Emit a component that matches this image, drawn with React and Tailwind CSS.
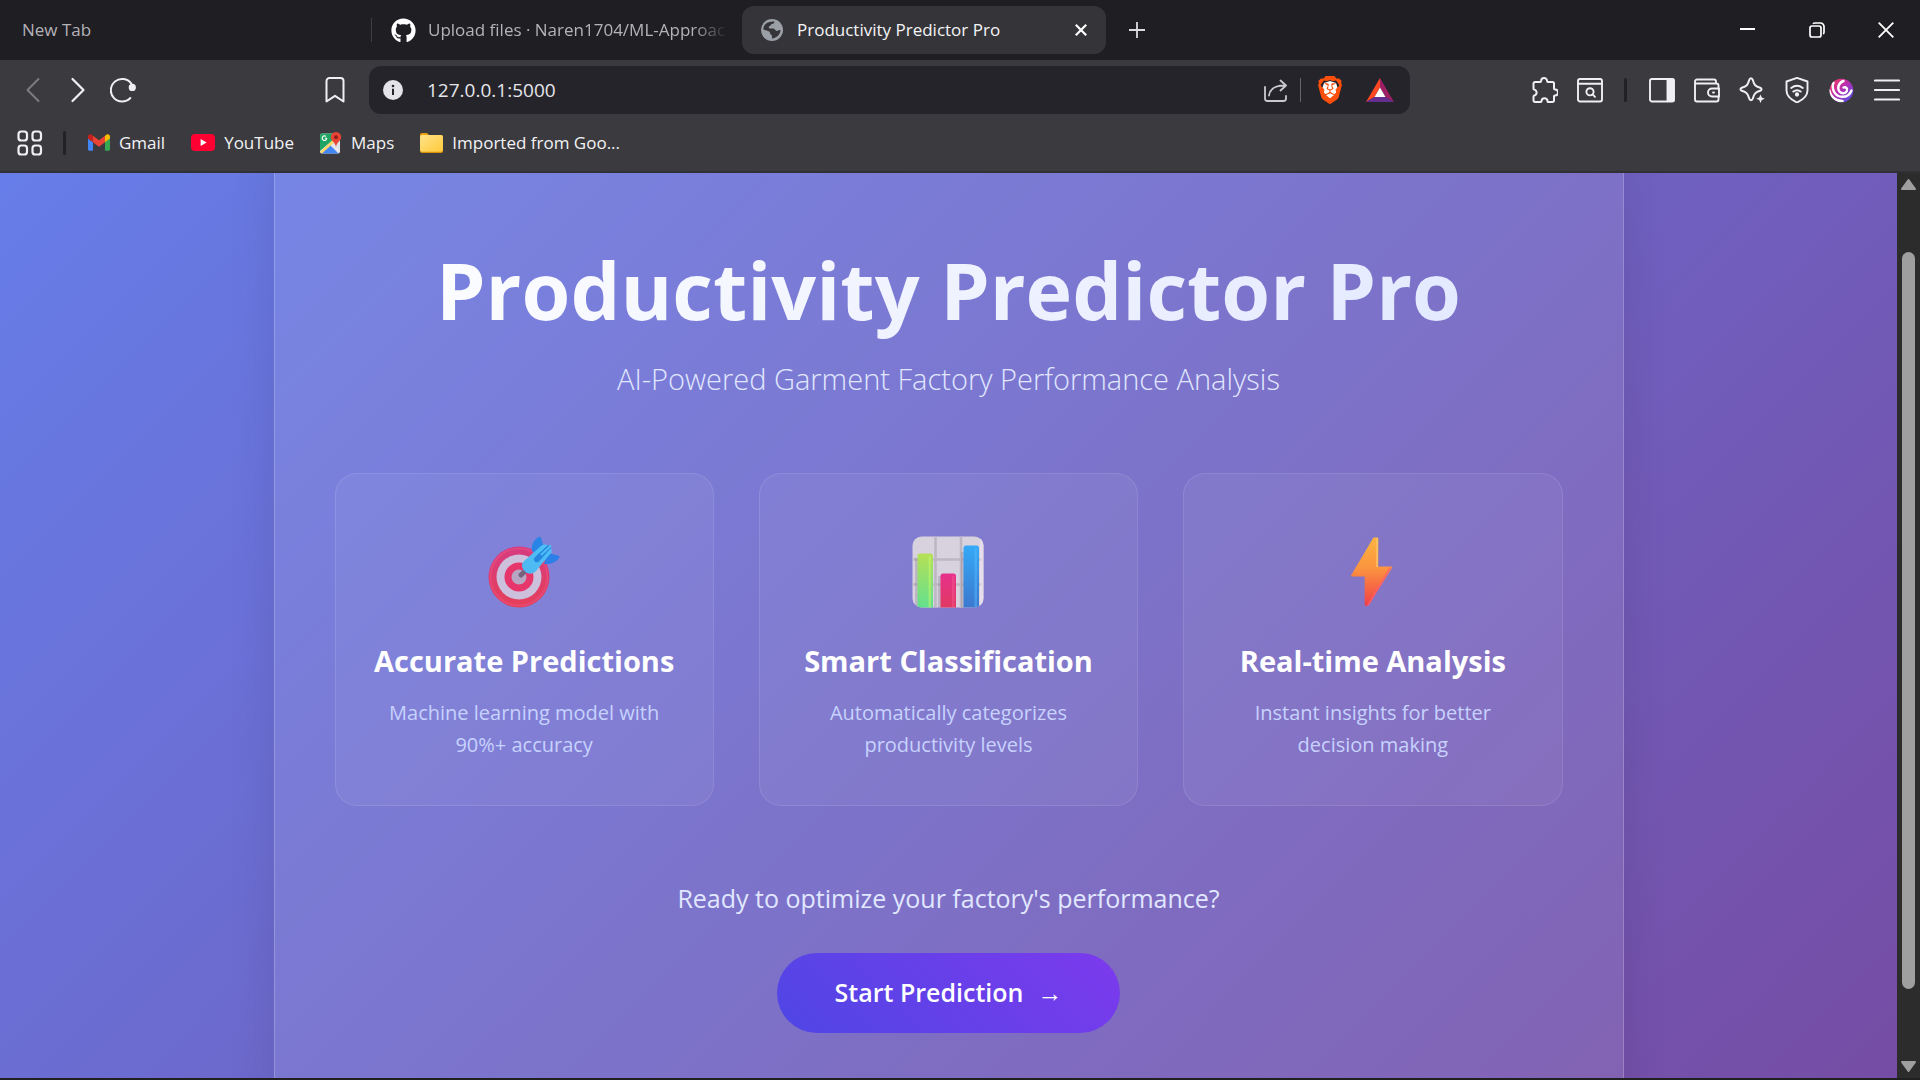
import React from "react";
import { FaGithub } from "react-icons/fa";
import { SiBrave } from "react-icons/si";

const ink = "#f0f0f3";

/* ---------- Toolbar icons ---------- */

function Stroke({ size = 26, width = 2, color = ink, children }) {
  return (
    <svg width={size} height={size} viewBox="0 0 26 26" fill="none" stroke={color} strokeWidth={width} strokeLinecap="round" strokeLinejoin="round" aria-hidden="true">
      {children}
    </svg>
  );
}

const BackIcon = () => (
  <Stroke color="#7d7c81"><path d="M18.500 2 7.500 13l11 11" /></Stroke>
);
const ForwardIcon = () => (
  <Stroke width={2.2}><path d="M7.500 2l11 11-11 11" /></Stroke>
);
const ReloadIcon = () => (
  <Stroke width={2}>
    <path d="M20.300 21A11.300 11.300 0 1 1 21.300 6.600" />
    <circle cx="22.300" cy="10.400" r="2.600" fill={ink} stroke={ink} />
  </Stroke>
);
const BookmarkIcon = () => (
  <Stroke><path d="M4.500 24.500V4a3 3 0 0 1 3-3h11a3 3 0 0 1 3 3v20.500L13 18.800z" /></Stroke>
);
const ShareIcon = () => (
  <Stroke color="#c9c9ce" width={1.8}>
    <path d="M2 10v11.500A2.500 2.500 0 0 0 4.500 24h16a2.500 2.500 0 0 0 2.500-2.500V19" />
    <path d="M6 18.500C7 11.500 11.500 8.500 22 8.500M17.500 3.500l5.500 5-5.500 5" />
  </Stroke>
);
const PuzzleIcon = () => (
  <Stroke>
    <path d="M3 5h5.200c.6 0 .9-.4.9-1a3 3 0 0 1 6 0c0 .6.3 1 .9 1h4.500a1.500 1.500 0 0 1 1.500 1.500v5c0 .6.4.9 1 .9a2.900 2.900 0 0 1 0 6c-.6 0-1 .3-1 .9V23.500A1.500 1.500 0 0 1 20.500 25h-4.200c-.5 0-.8-.3-.8-.8a3 3 0 0 0-6 0c0 .5-.3.8-.8.8H3a1.500 1.500 0 0 1-1.500-1.500v-4c0-.6.3-.8.8-.9a3.100 3.100 0 0 0 0-6c-.5-.1-.8-.3-.8-.9V6.500A1.500 1.500 0 0 1 3 5z" />
  </Stroke>
);
const PageSearchIcon = () => (
  <Stroke width={1.900}>
    <rect x="1" y="2" width="24" height="22.500" rx="2" />
    <path d="M1 6.800h24" />
    <circle cx="13" cy="14.800" r="3.600" />
    <path d="M15.600 17.400 18 19.800" />
  </Stroke>
);
const SidebarIcon = () => (
  <Stroke width={1.900}>
    <rect x="1" y="2" width="24" height="22.500" rx="2" />
    <path d="M18.500 2.500H24.500V24H18.500z" fill={ink} />
  </Stroke>
);
const WalletIcon = () => (
  <Stroke width={1.900}>
    <path d="M24.500 12V8.500a2 2 0 0 0-2-2H2.500M22 6.500V4.500a2 2 0 0 0-2-2H3A2 2 0 0 0 1 4.500V22.500a2 2 0 0 0 2 2h19.500a2 2 0 0 0 2-2V19.500" />
    <path d="M25 11.500H18a4 4 0 0 0 0 8h7zM19 15.500h1" />
  </Stroke>
);
const SparkleIcon = () => (
  <Stroke>
    <path d="M12 1.200c1 0 1.500.8 1.800 1.800 1.400 5 2.600 6.300 7.400 7.800 1.800.6 1.800 2.400 0 3-4.800 1.500-6 2.800-7.400 7.800-.6 2.200-3 2.200-3.600 0-1.400-5-2.600-6.300-7.400-7.800-1.800-.6-1.800-2.400 0-3C7.600 9.300 8.800 8 10.200 3c.3-1 .8-1.800 1.800-1.800z" />
    <path d="M21.500 17.500l1.300 3 3 1.200-3 1.300-1.300 3-1.300-3-3-1.300 3-1.200z" fill={ink} stroke="none" />
  </Stroke>
);
const VpnIcon = () => (
  <Stroke width={1.900}>
    <path d="M13 .9 23.500 4.500V13.500c0 5.500-4 9-10.500 12C6.500 22.500 2.500 19 2.500 13.500V4.500z" />
    <path d="M7.200 11c3.600-2.800 8-2.800 11.600 0M9.300 14.600c2.400-1.700 5-1.700 7.400 0" />
    <circle cx="13" cy="17.500" r="1.200" fill={ink} />
  </Stroke>
);
const SwirlIcon = () => (
  <svg width="25" height="25" viewBox="0 0 25 25" aria-hidden="true">
    <defs>
      <linearGradient id="swirl" x1="0" y1="0" x2="1" y2="1">
        <stop offset="0" stopColor="#ff3b55" />
        <stop offset=".5" stopColor="#b22fb6" />
        <stop offset="1" stopColor="#3f55e8" />
      </linearGradient>
      <clipPath id="swirlClip"><circle cx="12.500" cy="12.500" r="12" /></clipPath>
    </defs>
    <g clipPath="url(#swirlClip)">
      <circle cx="12.500" cy="12.500" r="12" fill="url(#swirl)" />
      <g fill="none" stroke="#fff" strokeLinecap="round">
        <path d="M14.500 9.500c2.500-1 4.500 1.500 3.300 3.700-1.500 2.700-5.300 2.800-7.300.3C8 10 9.500 4.500 14.500 3" strokeWidth="2.400" />
        <path d="M4.500 4.500C2 11 6 18.500 13 18.800c4.500.2 8-2.300 9.500-6.300" strokeWidth="2.400" />
        <path d="M0 12c1.500 6.500 6.500 11 13.500 11" strokeWidth="2.600" />
      </g>
    </g>
  </svg>
);
const MenuIcon = () => (
  <Stroke width={2.200}><path d="M1 3.500h24M1 13h24M1 22.500h24" /></Stroke>
);
const BraveIcon = () => (
  <svg width="26" height="28" viewBox="0 0 26 28" aria-hidden="true">
    <path d="M7 7 13 5l6 2 2 6-4 8-4 3-4-3-4-8z" fill="#fff" />
    <SiBrave x="-1" y="0" size={28} color="#fb4f0b" />
  </svg>
);
const BatIcon = () => (
  <svg width="28" height="25" viewBox="0 0 28 25" aria-hidden="true">
    <path d="M14 0 0 24l8.500-5L14 9.500z" fill="#ff4724" />
    <path d="M14 0l14 24-8.500-5L14 9.500z" fill="#9e1f63" />
    <path d="M0 24h28l-8.500-5h-11z" fill="#662d91" />
    <path d="M14 9.500 8.500 19h11z" fill="#fff" />
  </svg>
);
const InfoIcon = () => (
  <svg width="20" height="20" viewBox="0 0 20 20" aria-hidden="true">
    <circle cx="10" cy="10" r="10" fill="#e4e3e9" />
    <circle cx="10" cy="6" r="1.300" fill="#25242a" />
    <path d="M9 8.800h2V15H9z" fill="#25242a" />
  </svg>
);
const GlobeIcon = () => (
  <svg width="22" height="22" viewBox="0 0 22 22" aria-hidden="true">
    <circle cx="11" cy="11" r="11" fill="#9aa0a6" />
    <path d="M13.500 2.500c-.2 1.600-.8 2.300-2.200 2.500-1.800.2-1.500 1.700-2.800 2.200-1.600.6-.5 2.300.8 2.300h3.200c1.500 0 1.600 2.500 3.200 2.500 1.300 0 1.500-1.500 3.800-1-.3 4.700-3.600 8-8.500 8.500v-2.300c0-1.700-1.900-1.200-2-3.200-.1-2.500-3.500-2-6.500-3.500C2 6 6 1.800 13.500 2.500z" fill="#353439" />
  </svg>
);

/* ---------- Bookmark icons ---------- */

const AppsIcon = () => (
  <Stroke width={2.200}>
    <rect x="1.500" y="1.500" width="8.500" height="9" rx="2.800" />
    <rect x="15.500" y="1.500" width="8.500" height="9" rx="2.800" />
    <rect x="1.500" y="15.500" width="8.500" height="9" rx="2.800" />
    <rect x="15.500" y="15.500" width="8.500" height="9" rx="2.800" />
  </Stroke>
);
const GmailIcon = () => (
  <svg width="22" height="17" viewBox="52 42 88 66" aria-hidden="true">
    <path fill="#4285f4" d="M58 108h14V74L52 59v43c0 3.320 2.690 6 6 6" />
    <path fill="#34a853" d="M120 108h14c3.320 0 6-2.690 6-6V59l-20 15" />
    <path fill="#fbbc04" d="M120 48v26l20-15v-8c0-7.420-8.470-11.650-14.400-7.200" />
    <path fill="#ea4335" d="M72 74V48l24 18 24-18v26L96 92" />
    <path fill="#c5221f" d="M52 51v8l20 15V48l-5.600-4.200c-5.940-4.450-14.400-.22-14.400 7.200" />
  </svg>
);
const YouTubeIcon = () => (
  <svg width="24" height="17" viewBox="0 0 24 17" aria-hidden="true">
    <rect width="24" height="17" rx="4" fill="#ff0033" />
    <path d="M9.600 5v7l6-3.500z" fill="#fff" />
  </svg>
);
const MapsIcon = () => (
  <svg width="22" height="22" viewBox="0 0 22 22" aria-hidden="true">
    <defs><clipPath id="mapTile"><rect x="0" y="1.500" width="20" height="20" rx="2" /></clipPath></defs>
    <g clipPath="url(#mapTile)">
      <rect width="22" height="22" fill="#e4e6ea" />
      <path d="M0 0h22L0 19z" fill="#1fa463" />
      <path d="M0 22 9.500 12.500 19 22z" fill="#4285f4" />
      <path d="M12.500 11 22 19v-9l-6-2z" fill="#dfe2e6" />
      <path d="M0 20 18 3l2 2L1.500 22z" fill="#fdd663" />
    </g>
    <path d="M7 6.300H4.800M6.800 6.300A2.300 2.300 0 1 1 6 4.400" stroke="#fff" strokeWidth="1.100" fill="none" />
    <path d="M16 0a5.200 5.200 0 0 1 5.200 5.200C21.200 9 16.800 9.500 16 15c-.8-5.500-5.200-6-5.200-9.800A5.200 5.200 0 0 1 16 0z" fill="#e94335" />
    <circle cx="16" cy="5.200" r="1.900" fill="#8a1d16" />
  </svg>
);
const FolderIcon = () => (
  <svg width="23" height="20" viewBox="0 0 23 20" aria-hidden="true">
    <defs><linearGradient id="folder" x1="0" y1="0" x2="1" y2="1"><stop offset="0" stopColor="#ffe38a" /><stop offset="1" stopColor="#ffc93a" /></linearGradient></defs>
    <path d="M0 2a2 2 0 0 1 2-2h5l3 3H0z" fill="#e8a00c" />
    <path d="M0 4a2 2 0 0 1 2-2h19a2 2 0 0 1 2 2v14a2 2 0 0 1-2 2H2a2 2 0 0 1-2-2z" fill="#d9930a" />
    <path d="M0 4a2 2 0 0 1 2-2h19a2 2 0 0 1 2 2v12.800a2 2 0 0 1-2 2H2a2 2 0 0 1-2-2z" fill="url(#folder)" />
  </svg>
);

/* ---------- Feature icons ---------- */

const TargetIcon = () => (
  <svg width="72" height="72" viewBox="0 0 72 72" aria-hidden="true">
    <defs>
      <linearGradient id="ring" x1="0" y1="0" x2="0" y2="1"><stop offset="0" stopColor="#d63b82" /><stop offset="1" stopColor="#e63f58" /></linearGradient>
      <linearGradient id="dart" x1="0" y1="1" x2="1" y2="0"><stop offset="0" stopColor="#50b6f0" /><stop offset="1" stopColor="#4cc3f8" /></linearGradient>
    </defs>
    <circle cx="31" cy="41" r="30.500" fill="url(#ring)" />
    <circle cx="31" cy="41" r="28.500" fill="none" stroke="#e9507f" strokeWidth="1.500" opacity=".7" />
    <circle cx="31" cy="41" r="22.500" fill="#cdc0dc" />
    <circle cx="31" cy="41" r="14.500" fill="#e7366b" />
    <circle cx="31" cy="41" r="7.500" fill="#b7a6c2" />
    <path d="M33 39 39 33" stroke="#77617f" strokeWidth="5" strokeLinecap="round" />
    <path d="M44 15c-1-7 2-11 6.500-14 1.500-.8 2.500.5 3 2L56 12 47 18z" fill="#2a84e6" />
    <path d="M60 17l10 2.500c1.500.5 1.800 1.500 1 2.500-3.500 4.500-8 6.500-15 6z" fill="#2a7fe8" />
    <path d="M35 26 53 10c3-2 5-1.500 7-.8 2.800 1.500 4 4 3.500 7L48 35c-3 3.500-8 3.500-11 .5-3-3-4-6.500-2-9.500z" fill="url(#dart)" />
    <path d="M46.500 21.500 60 9l3 3-12 13.500c-3 2.500-6.500-1-4.500-4z" fill="#2686e0" />
    <path d="M53 19 63 9.500" stroke="#4fc0f7" strokeWidth="2" />
  </svg>
);
const ChartIcon = () => (
  <svg width="72" height="72" viewBox="0 0 72 72" aria-hidden="true">
    <defs>
      <linearGradient id="barA" x1="0" y1="0" x2="0" y2="1"><stop offset="0" stopColor="#b6e056" /><stop offset="1" stopColor="#62e08e" /></linearGradient>
      <linearGradient id="barB" x1="0" y1="0" x2="0" y2="1"><stop offset="0" stopColor="#e8308c" /><stop offset="1" stopColor="#e03a62" /></linearGradient>
      <linearGradient id="barC" x1="0" y1="0" x2="0" y2="1"><stop offset="0" stopColor="#35a9f7" /><stop offset="1" stopColor="#3b78ce" /></linearGradient>
      <clipPath id="chartTile"><rect x=".5" y=".5" width="71" height="71" rx="9" /></clipPath>
    </defs>
    <g clipPath="url(#chartTile)">
      <rect width="72" height="72" fill="#d8d2df" />
      <path d="M0 23.500h72M0 48.500h72M23.500 0v72M49 0v72" stroke="#bdb6c3" strokeWidth="2.500" />
      <path d="M68 0h4v72h-4z" fill="#ece4f0" opacity=".7" />
      <path d="M3 22h3v50H3zM26 40h3v32h-3zM49 16h3v56h-3z" fill="#8d8496" opacity=".35" />
      <path d="M5.500 72V20a2.500 2.500 0 0 1 2.500-2.500H18.500A2.500 2.500 0 0 1 21 20v52z" fill="url(#barA)" />
      <path d="M16.500 20h2.500v52h-2.500z" fill="#c6f56c" opacity=".5" />
      <path d="M28.500 72V40a2.500 2.500 0 0 1 2.500-2.500H41.500A2.500 2.500 0 0 1 44 40v32z" fill="url(#barB)" />
      <path d="M40 40h2.500v32H40z" fill="#f5568f" opacity=".5" />
      <path d="M51.500 72V12a2.500 2.500 0 0 1 2.500-2.500H64.500A2.500 2.500 0 0 1 67 12v60z" fill="url(#barC)" />
      <path d="M62.500 12H65v60h-2.500z" fill="#55b8ff" opacity=".5" />
    </g>
  </svg>
);
const BoltIcon = () => (
  <svg width="72" height="72" viewBox="0 0 72 72" aria-hidden="true">
    <defs><linearGradient id="bolt" x1="0" y1="0" x2="0" y2="1"><stop offset="0" stopColor="#fbb33f" /><stop offset=".45" stopColor="#fb9440" /><stop offset="1" stopColor="#f13f47" /></linearGradient></defs>
    <path d="M37 1.500h3.500a.8.800 0 0 1 .8.800V30.500H54.500c.8 0 1 .6.600 1.200L32 68.500c-.6 1-1.300 1.300-2.300 1.300h-1.200a.8.800 0 0 1-.8-.8V40.500H15c-1 0-1.200-.6-.7-1.400L36 2.200c.3-.5.500-.7 1-.7z" fill="url(#bolt)" />
    <path d="M40 2v29" stroke="#ffc266" strokeWidth="1.600" />
    <path d="M53.500 31.500 31 69" stroke="#ff5f6b" strokeWidth="2" opacity=".75" />
  </svg>
);

/* ---------- Browser chrome ---------- */

function ToolButton({ label, children }) {
  return (
    <button type="button" aria-label={label} className="flex h-[45px] w-[45px] shrink-0 items-center justify-center">
      {children}
    </button>
  );
}

function TabBar() {
  return (
    <header className="flex h-[60px] shrink-0 items-center bg-[#1f1e23] text-[17px] text-[#b4b3b8]">
      <button type="button" className="h-12 w-[371px] pl-[22px] text-left">New Tab</button>
      <button type="button" className="relative flex h-12 w-[363px] items-center gap-3 pl-5">
        <span className="absolute left-0 top-3 h-6 w-px bg-[#3f3e44]" />
        <FaGithub size={25} color="#fff" className="shrink-0" />
        <span className="w-[300px] overflow-hidden whitespace-nowrap text-left [mask-image:linear-gradient(to_right,black_88%,transparent_100%)]">
          Upload files · Naren1704/ML-Approac
        </span>
      </button>
      <div className="ml-2 flex h-12 w-[364px] items-center rounded-xl bg-[#353439] pl-[19px] pr-[11px] text-[#f4f4f6]">
        <button type="button" className="flex flex-1 items-center gap-3.5 text-left">
          <GlobeIcon />
          Productivity Predictor Pro
        </button>
        <button type="button" aria-label="Close tab" className="flex h-7 w-7 items-center justify-center">
          <svg width="12" height="12" viewBox="0 0 12 12" stroke="#fff" strokeWidth="2.200" aria-hidden="true"><path d="M.8.8l10.400 10.400M11.200.8.8 11.200" /></svg>
        </button>
      </div>
      <button type="button" aria-label="New tab" className="ml-[11px] flex h-10 w-10 items-center justify-center">
        <svg width="16" height="16" viewBox="0 0 16 16" stroke="#dcdce0" strokeWidth="1.800" aria-hidden="true"><path d="M8 0v16M0 8h16" /></svg>
      </button>
      <div className="ml-auto flex">
        <button type="button" aria-label="Minimize" className="flex h-[60px] w-[69px] items-center justify-center">
          <svg width="15" height="16" viewBox="0 0 15 16" stroke="#fff" strokeWidth="2" aria-hidden="true"><path d="M0 7h15" /></svg>
        </button>
        <button type="button" aria-label="Restore" className="flex h-[60px] w-[69px] items-center justify-center">
          <svg width="16" height="16" viewBox="0 0 16 16" fill="none" stroke="#fff" strokeWidth="1.700" aria-hidden="true"><rect x="1" y="4" width="11" height="11" rx="2" /><path d="M4 1.800C4.500 1.200 5 1 6 1h5.500A3.500 3.500 0 0 1 15 4.500V10c0 1-.2 1.500-.8 2" /></svg>
        </button>
        <button type="button" aria-label="Close" className="flex h-[60px] w-[69px] items-center justify-center">
          <svg width="16" height="16" viewBox="0 0 16 16" stroke="#fff" strokeWidth="1.800" aria-hidden="true"><path d="M.7.7l14.600 14.600M15.300.7.700 15.300" /></svg>
        </button>
      </div>
    </header>
  );
}

function Toolbar() {
  return (
    <div className="flex h-[60px] shrink-0 items-center bg-[#3b3a3f]">
      <div className="flex w-[369px] shrink-0 items-center pl-2.5 pr-3">
        <ToolButton label="Back"><BackIcon /></ToolButton>
        <ToolButton label="Forward"><ForwardIcon /></ToolButton>
        <ToolButton label="Reload"><ReloadIcon /></ToolButton>
        <div className="ml-auto"><ToolButton label="Bookmark this page"><BookmarkIcon /></ToolButton></div>
      </div>
      <div className="flex h-12 flex-1 items-center rounded-xl bg-[#25242a] pl-3.5 pr-4">
        <button type="button" aria-label="Site information"><InfoIcon /></button>
        <input aria-label="Address" defaultValue="127.0.0.1:5000" className="ml-6 min-w-0 flex-1 bg-transparent text-[19px] text-[#e6e6ea] outline-none" />
        <button type="button" aria-label="Share" className="flex w-8 justify-center"><ShareIcon /></button>
        <span className="mx-2 h-6 w-px bg-[#66656b]" />
        <button type="button" aria-label="Brave Shields" className="ml-2 mr-[23px]"><BraveIcon /></button>
        <button type="button" aria-label="Brave Rewards"><BatIcon /></button>
      </div>
      <div className="flex w-[510px] shrink-0 items-center justify-end pr-[11px]">
        <ToolButton label="Extensions"><PuzzleIcon /></ToolButton>
        <ToolButton label="Search in page"><PageSearchIcon /></ToolButton>
        <div className="flex w-[27px] justify-center"><span className="h-6 w-[3px] rounded-full bg-[#222126]" /></div>
        <ToolButton label="Sidebar"><SidebarIcon /></ToolButton>
        <ToolButton label="Wallet"><WalletIcon /></ToolButton>
        <ToolButton label="Leo AI"><SparkleIcon /></ToolButton>
        <ToolButton label="VPN"><VpnIcon /></ToolButton>
        <ToolButton label="Profile"><SwirlIcon /></ToolButton>
        <ToolButton label="Menu"><MenuIcon /></ToolButton>
      </div>
    </div>
  );
}

const bookmarks = [
  { label: "Gmail", Icon: GmailIcon },
  { label: "YouTube", Icon: YouTubeIcon },
  { label: "Maps", Icon: MapsIcon },
  { label: "Imported from Goo...", Icon: FolderIcon },
];

function BookmarksBar() {
  return (
    <nav className="flex h-[53px] shrink-0 items-center border-b-2 border-[#313035] bg-[#3b3a3f] pb-1.5 text-[17px] text-[#f2f2f4]">
      <button type="button" aria-label="Apps" className="ml-[17px]"><AppsIcon /></button>
      <span className="ml-5 mr-[22px] h-6 w-[3px] rounded-full bg-[#222126]" />
      <div className="flex items-center gap-[26px]">
        {bookmarks.map(({ label, Icon }) => (
          <a key={label} href="#" className="flex items-center gap-[9px]">
            <Icon />
            {label}
          </a>
        ))}
      </div>
    </nav>
  );
}

/* ---------- Page ---------- */

const features = [
  { title: "Accurate Predictions", lines: ["Machine learning model with", "90%+ accuracy"], Icon: TargetIcon },
  { title: "Smart Classification", lines: ["Automatically categorizes", "productivity levels"], Icon: ChartIcon },
  { title: "Real-time Analysis", lines: ["Instant insights for better", "decision making"], Icon: BoltIcon },
];

function FeatureCard({ title, lines, Icon }) {
  return (
    <article className="rounded-[22px] border border-white/10 bg-white/5 px-8 py-11 text-center">
      <div className="flex h-[107px] items-center justify-center"><Icon /></div>
      <h3 className="mt-3.5 text-[29px] font-bold leading-[44px] text-white">{title}</h3>
      <p className="mt-3.5 text-[20px] leading-8 text-[#c7d2fe]">
        {lines[0]}
        <br />
        {lines[1]}
      </p>
    </article>
  );
}

function Page() {
  return (
    <main className="-mt-[70px] bg-[linear-gradient(135deg,#667eea_0%,#764ba2_100%)] py-[30px]">
      <section className="mx-auto max-w-[1350px] rounded-[30px] border border-white/20 bg-white/10 px-[60px] pb-25 pt-25 text-center shadow-[0_12px_48px_rgba(0,0,0,0.1)]">
        <h1 className="bg-[linear-gradient(135deg,#ffffff,#e0e7ff)] bg-clip-text text-[79px] font-bold leading-[112px] text-transparent">
          Productivity Predictor Pro
        </h1>
        <p className="mt-[11px] text-[29px] font-light leading-[44px] text-[#e0e7ff]">
          AI-Powered Garment Factory Performance Analysis
        </p>
        <div className="mt-[72px] grid grid-cols-3 gap-[45px]">
          {features.map((f) => <FeatureCard key={f.title} {...f} />)}
        </div>
        <p className="mt-[72px] text-[25px] leading-10 text-[#e0e7ff]">Ready to optimize your factory's performance?</p>
        <a href="#" className="mt-[35px] inline-flex h-20 items-center gap-3.5 rounded-full bg-[linear-gradient(45deg,#4f46e5,#7c3aed)] px-[58px] text-[25px] font-semibold text-white">
          Start Prediction
          <span>→</span>
        </a>
      </section>
    </main>
  );
}

function Scrollbar() {
  return (
    <div className="flex w-[23px] shrink-0 flex-col items-center bg-[#2c2c2c] py-1.5">
      <svg width="15" height="11" viewBox="0 0 15 11" fill="#9f9f9f" stroke="#9f9f9f" strokeWidth="2" strokeLinejoin="round" aria-hidden="true"><path d="M7.500 1 14 10H1z" /></svg>
      <div className="flex w-[13px] flex-1 flex-col py-1">
        <div className="flex-[58]" />
        <div className="flex-[738] rounded-full bg-[#9f9f9f]" />
        <div className="flex-[68]" />
      </div>
      <svg width="15" height="11" viewBox="0 0 15 11" fill="#9f9f9f" stroke="#9f9f9f" strokeWidth="2" strokeLinejoin="round" aria-hidden="true"><path d="M7.500 10 14 1H1z" /></svg>
    </div>
  );
}

export default function App() {
  return (
    <div className="flex h-screen flex-col overflow-hidden border-b-2 border-[#202020] bg-[#2c2c2c] font-['Open_Sans','Noto_Sans',sans-serif]">
      <TabBar />
      <Toolbar />
      <BookmarksBar />
      <div className="flex min-h-0 flex-1">
        <div className="min-w-0 flex-1 overflow-hidden"><Page /></div>
        <Scrollbar />
      </div>
    </div>
  );
}
